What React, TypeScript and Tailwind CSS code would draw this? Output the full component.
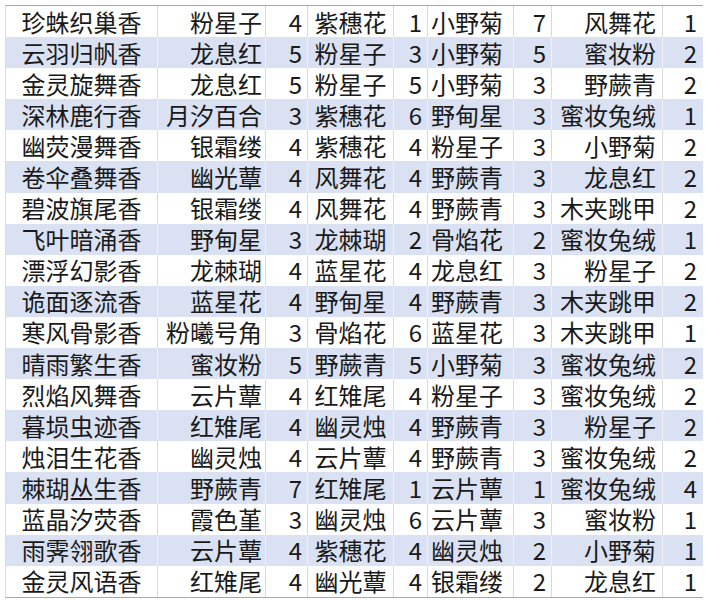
const ROWS: [string, string, number, string, number, string, number, string, number][] = [
  ["珍蛛织巢香", "粉星子", 4, "紫穗花", 1, "小野菊", 7, "风舞花", 1],
  ["云羽归帆香", "龙息红", 5, "粉星子", 3, "小野菊", 5, "蜜妆粉", 2],
  ["金灵旋舞香", "龙息红", 5, "粉星子", 5, "小野菊", 3, "野蕨青", 2],
  ["深林鹿行香", "月汐百合", 3, "紫穗花", 6, "野甸星", 3, "蜜妆兔绒", 1],
  ["幽荧漫舞香", "银霜缕", 4, "紫穗花", 4, "粉星子", 3, "小野菊", 2],
  ["卷伞叠舞香", "幽光蕈", 4, "风舞花", 4, "野蕨青", 3, "龙息红", 2],
  ["碧波旗尾香", "银霜缕", 4, "风舞花", 4, "野蕨青", 3, "木夹跳甲", 2],
  ["飞叶暗涌香", "野甸星", 3, "龙棘瑚", 2, "骨焰花", 2, "蜜妆兔绒", 1],
  ["漂浮幻影香", "龙棘瑚", 4, "蓝星花", 4, "龙息红", 3, "粉星子", 2],
  ["诡面逐流香", "蓝星花", 4, "野甸星", 4, "野蕨青", 3, "木夹跳甲", 2],
  ["寒风骨影香", "粉曦号角", 3, "骨焰花", 6, "蓝星花", 3, "木夹跳甲", 1],
  ["晴雨繁生香", "蜜妆粉", 5, "野蕨青", 5, "小野菊", 3, "蜜妆兔绒", 2],
  ["烈焰风舞香", "云片蕈", 4, "红雉尾", 4, "粉星子", 3, "蜜妆兔绒", 2],
  ["暮埙虫迹香", "红雉尾", 4, "幽灵烛", 4, "野蕨青", 3, "粉星子", 2],
  ["烛泪生花香", "幽灵烛", 4, "云片蕈", 4, "野蕨青", 3, "蜜妆兔绒", 2],
  ["棘瑚丛生香", "野蕨青", 7, "红雉尾", 1, "云片蕈", 1, "蜜妆兔绒", 4],
  ["蓝晶汐荧香", "霞色堇", 3, "幽灵烛", 6, "云片蕈", 3, "蜜妆粉", 1],
  ["雨霁翎歌香", "云片蕈", 4, "紫穗花", 4, "幽灵烛", 2, "小野菊", 1],
  ["金灵风语香", "红雉尾", 4, "幽光蕈", 4, "银霜缕", 2, "龙息红", 1],
];

export default function App() {
  return (
    <div
      className="w-[710px] h-[600px] bg-white pt-[5px] pl-[5px] text-[24px] text-[#1a1a1a]"
      style={{ fontFamily: '"Noto Sans CJK SC", "Noto Sans", sans-serif' }}
    >
      <div className="w-[698px] border-t border-b border-[#8ea9db] border-l border-l-[#dcdcdc]">
        {ROWS.map((r, i) => {
          const band = i % 2 === 1;
          const sep = band ? "border-r border-[#eef1f8]" : "border-r border-[#d9d9d9]";
          return (
            <div
              key={r[0]}
              className={`grid grid-cols-[152px_108px_42px_86px_34px_86px_38px_111px_41px] h-[31.1px] leading-none items-stretch ${band ? "bg-[#d9e1f2]" : "bg-white"}`}
            >
              <div className={`flex items-center justify-center ${sep}`}>{r[0]}</div>
              <div className={`flex items-center justify-end pr-[3px] ${sep}`}>{r[1]}</div>
              <div className={`flex items-center justify-end pr-[5px] ${sep}`}>{r[2]}</div>
              <div className={`flex items-center justify-center ${sep}`}>{r[3]}</div>
              <div className={`flex items-center justify-end pr-[5px] ${sep}`}>{r[4]}</div>
              <div className={`flex items-center justify-start pl-[3px] ${sep}`}>{r[5]}</div>
              <div className={`flex items-center justify-end pr-[5px] ${sep}`}>{r[6]}</div>
              <div className={`flex items-center justify-end pr-[6px] ${sep}`}>{r[7]}</div>
              <div className="flex items-center justify-end pr-[7px]">{r[8]}</div>
            </div>
          );
        })}
      </div>
    </div>
  );
}
